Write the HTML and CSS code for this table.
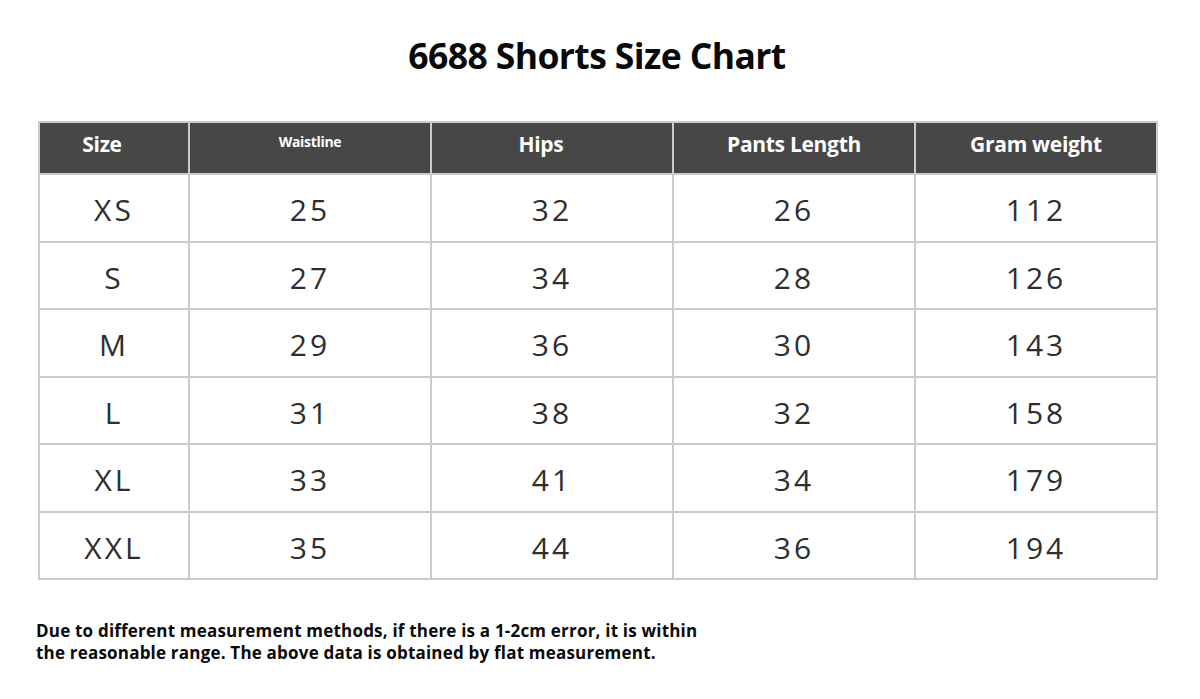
FILE: index.html
```html
<!DOCTYPE html>
<html>
<head>
<meta charset="utf-8">
<link rel="stylesheet" href="styles.css">
</head>
<body>
<div class="page">
  <h1 class="title">6688 Shorts Size Chart</h1>
  <table class="chart">
    <colgroup>
      <col class="c-size"><col class="c-data"><col class="c-data"><col class="c-data"><col class="c-data">
    </colgroup>
    <thead>
      <tr>
        <th class="h-size">Size</th>
        <th class="h-small">Waistline</th>
        <th class="h-hips">Hips</th>
        <th>Pants Length</th>
        <th>Gram weight</th>
      </tr>
    </thead>
    <tbody>
      <tr><td>XS</td><td>25</td><td>32</td><td>26</td><td>112</td></tr>
      <tr><td>S</td><td>27</td><td>34</td><td>28</td><td>126</td></tr>
      <tr><td>M</td><td>29</td><td>36</td><td>30</td><td>143</td></tr>
      <tr><td>L</td><td>31</td><td>38</td><td>32</td><td>158</td></tr>
      <tr><td>XL</td><td>33</td><td>41</td><td>34</td><td>179</td></tr>
      <tr><td>XXL</td><td>35</td><td>44</td><td>36</td><td>194</td></tr>
    </tbody>
  </table>
  <p class="note">Due to different measurement methods, if there is a 1-2cm error, it is within<br>the reasonable range. The above data is obtained by flat measurement.</p>
</div>
</body>
</html>
```

FILE: styles.css
```css
html, body {
  margin: 0;
  padding: 0;
  background: #ffffff;
}
.page {
  width: 1200px;
  height: 699px;
  padding-top: 33px;
  box-sizing: border-box;
  font-family: "Open Sans", "Liberation Sans", sans-serif;
}
.title {
  margin: 0;
  height: 88px;
  text-align: center;
  font-size: 35.5px;
  font-weight: 700;
  line-height: 44px;
  color: #0a0a0a;
  letter-spacing: -0.6px;
  padding-right: 6px;
}
.chart {
  margin-left: 38px;
  border-collapse: collapse;
  table-layout: fixed;
  width: 1120px;
}
.c-size { width: 150px; }
.c-data { width: 242px; }
.chart th, .chart td {
  border: 2px solid #cbcbcb;
  text-align: center;
  padding: 0;
  box-sizing: border-box;
}
.chart th {
  background: #474747;
  color: #ffffff;
  height: 52px;
  line-height: 24px;
  padding-bottom: 8px;
  font-size: 21px;
  font-weight: 700;
  letter-spacing: -0.3px;
}
.chart th.h-size { padding-right: 24px; }
.chart th.h-small { font-size: 14px; padding-bottom: 12px; }
.chart th.h-hips { padding-right: 22px; }
.chart td {
  height: 67.5px;
  font-size: 30px;
  font-weight: 400;
  color: #2e2e2e;
  letter-spacing: 3px;
  padding-top: 4px;
}
.note {
  margin: 40px 0 0 36px;
  font-size: 17px;
  font-weight: 700;
  line-height: 22px;
  color: #0a0a0a;
  letter-spacing: 0.2px;
}
```
